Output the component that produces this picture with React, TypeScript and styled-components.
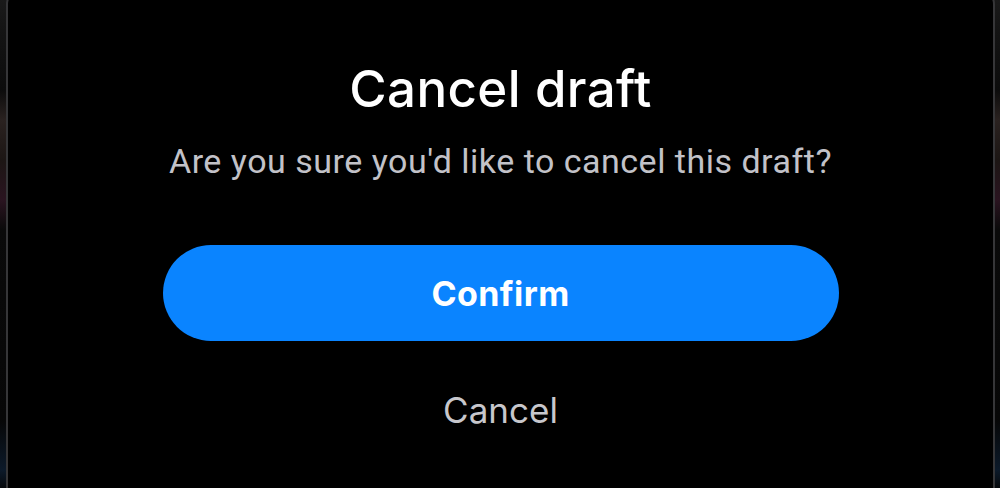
import React from 'react';
import styled, { createGlobalStyle } from 'styled-components';

const GlobalStyle = createGlobalStyle`
  html, body {
    margin: 0;
    padding: 0;
    height: 100%;
    overflow: hidden;
    background: #050505;
  }

  #root {
    height: 100%;
  }
`;

const Backdrop = styled.div`
  height: 100%;
  display: flex;
  align-items: flex-start;
  padding-left: 6px;
  padding-right: 5px;
  background: linear-gradient(
    180deg,
    #1a1a1a 0px,
    #141414 30px,
    #0c0c0c 90px,
    #2a2220 120px,
    #1c1614 160px,
    #2a1420 200px,
    #0a0a0a 230px,
    #070707 420px,
    #0c1a2a 470px,
    #06090c 488px
  );
`;

const Sheet = styled.div`
  flex: 1;
  margin-top: -10px;
  height: calc(100% + 30px);
  box-sizing: border-box;
  background: #000000;
  border: 2px solid #363638;
  border-radius: 14px;
  display: flex;
  flex-direction: column;
  align-items: center;
  padding-top: 68px;
`;

const Title = styled.h1`
  margin: 0;
  font-family: Inter, 'Noto Sans', sans-serif;
  font-size: 51px;
  font-weight: 500;
  line-height: 58px;
  color: #ffffff;
  letter-spacing: 0.4px;
`;

const Message = styled.p`
  margin: 23px 0 0;
  font-family: Roboto, 'Noto Sans', sans-serif;
  font-size: 34px;
  font-weight: 400;
  line-height: 40px;
  color: #c2c2c8;
  letter-spacing: 0.5px;
`;

const Actions = styled.div`
  margin-top: 64px;
  display: flex;
  flex-direction: column;
  align-items: center;
`;

const Button = styled.button<{ primary?: boolean }>`
  border: none;
  cursor: pointer;
  font-family: Inter, 'Noto Sans', sans-serif;
  font-size: ${p => (p.primary ? '34px' : '35px')};
  letter-spacing: ${p => (p.primary ? '0.4px' : '0')};
  width: ${p => (p.primary ? '676px' : 'auto')};
  height: ${p => (p.primary ? '96px' : '88px')};
  margin-top: ${p => (p.primary ? '0' : '25px')};
  border-radius: 48px;
  background: ${p => (p.primary ? '#0a84ff' : 'transparent')};
  color: ${p => (p.primary ? '#ffffff' : '#c7c7cc')};
  font-weight: ${p => (p.primary ? 700 : 400)};
  padding: 0 24px;
`;

const App = () => {
  return (
    <>
      <GlobalStyle />
      <Backdrop>
        <Sheet>
          <Title>Cancel draft</Title>
          <Message>Are you sure you'd like to cancel this draft?</Message>
          <Actions>
            <Button primary>Confirm</Button>
            <Button>Cancel</Button>
          </Actions>
        </Sheet>
      </Backdrop>
    </>
  );
};

export default App;
